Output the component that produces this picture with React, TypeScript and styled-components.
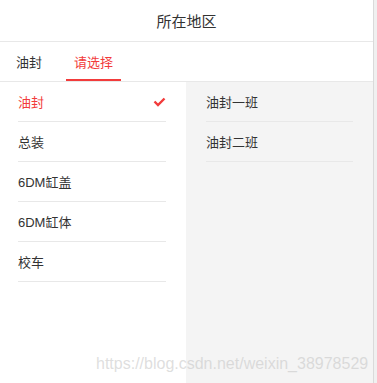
import styled, { createGlobalStyle } from "styled-components";

const GlobalStyle = createGlobalStyle`
  html, body {
    margin: 0;
    padding: 0;
    background: #f0f0f0;
  }
  body {
    font-family: "Liberation Sans", "Noto Sans CJK SC", sans-serif;
    color: #333;
  }
`;

const provinces = ["油封", "总装", "6DM缸盖", "6DM缸体", "校车"];
const teams = ["油封一班", "油封二班"];
const RED = "#f23b3b";

export default function App() {
  const active = 0;
  return (
    <>
      <GlobalStyle />
      <Page>
        <Header>所在地区</Header>
        <TabBar>
          <Tab>油封</Tab>
          <Tab $active>请选择</Tab>
        </TabBar>
        <Body>
          <LeftColumn>
            {provinces.map((name, i) => (
              <Row key={name} $active={i === active}>
                {name}
                {i === active && (
                  <svg width="13" height="10" viewBox="0 0 13 10">
                    <polyline
                      points="1.5,4.5 5,8 11.5,1.5"
                      fill="none"
                      stroke={RED}
                      strokeWidth="2.4"
                    />
                  </svg>
                )}
              </Row>
            ))}
          </LeftColumn>
          <RightColumn>
            {teams.map((name) => (
              <Row key={name}>{name}</Row>
            ))}
          </RightColumn>
        </Body>
        <Watermark>https://blog.csdn.net/weixin_38978529</Watermark>
      </Page>
    </>
  );
}

const Page = styled.div`
  position: relative;
  box-sizing: border-box;
  width: 374px;
  height: 383px;
  display: flex;
  flex-direction: column;
  background: #fff;
  border-right: 1px solid #dadada;
  overflow: hidden;
`;

const Header = styled.div`
  height: 41px;
  border-bottom: 1px solid #e8e8e8;
  display: flex;
  align-items: center;
  justify-content: center;
  font-size: 15px;
  color: #333;
`;

const TabBar = styled.div`
  height: 39px;
  border-bottom: 1px solid #e8e8e8;
  display: flex;
  padding-left: 8px;
  gap: 16px;
`;

const Tab = styled.div<{ $active?: boolean }>`
  padding: 0 8px;
  display: flex;
  align-items: center;
  font-size: 13px;
  color: ${(p) => (p.$active ? RED : "#333")};
  border-bottom: 2px solid ${(p) => (p.$active ? RED : "transparent")};
  margin-top: 1px;
`;

const Body = styled.div`
  flex: 1;
  display: flex;
`;

const LeftColumn = styled.div`
  width: 186px;
  box-sizing: border-box;
  padding: 0 20px 0 18px;
  background: #fff;
`;

const RightColumn = styled.div`
  flex: 1;
  padding: 0 20px;
  background: #f4f4f4;
`;

const Row = styled.div<{ $active?: boolean }>`
  height: 39px;
  border-bottom: 1px solid #e8e8e8;
  display: flex;
  align-items: center;
  justify-content: space-between;
  font-size: 13px;
  color: ${(p) => (p.$active ? RED : "#333")};
`;

const Watermark = styled.div`
  position: absolute;
  left: 96px;
  top: 355px;
  font-family: "Liberation Sans", Arial, sans-serif;
  font-size: 16px;
  color: rgba(200, 200, 200, 0.6);
  white-space: nowrap;
  pointer-events: none;
`;
